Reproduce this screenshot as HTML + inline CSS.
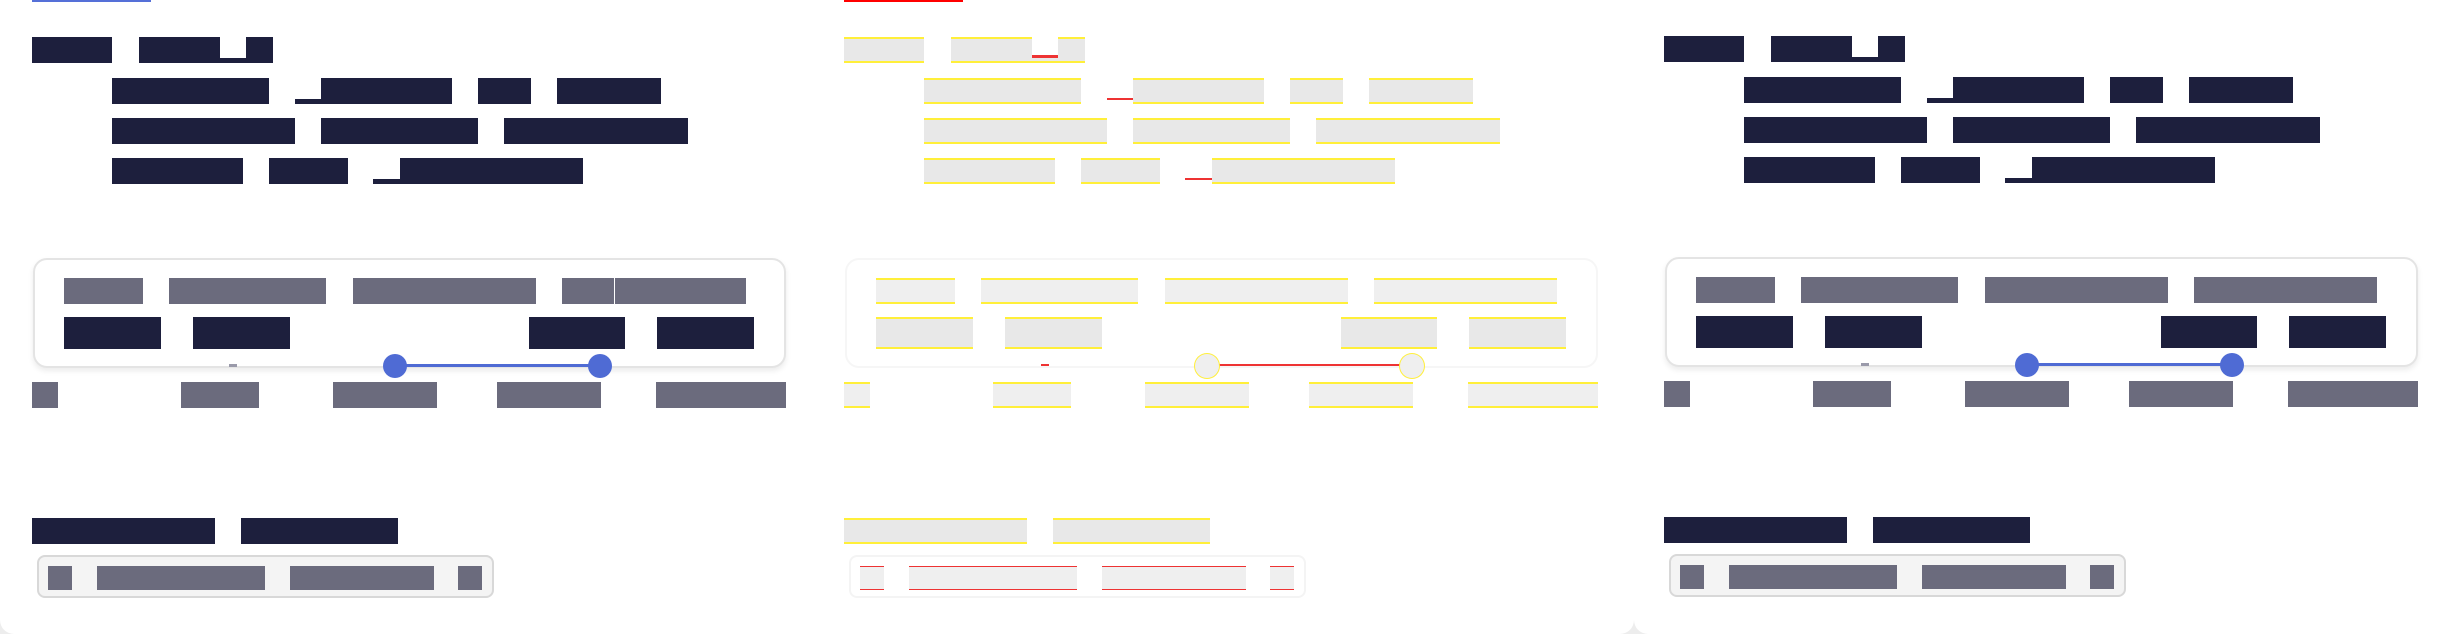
<!DOCTYPE html>
<html><head><meta charset="utf-8"><style>
html,body{margin:0;padding:0;background:#ededed;width:2448px;height:634px;overflow:hidden;font-family:"Liberation Sans",sans-serif}
.p{position:absolute;top:0;height:634px;background:#fff;overflow:hidden}
.p div{position:absolute}
.n{background:#1d1f3d}
.g{background:#6b6b7d}
.w{background:#fff}
.card{border:2px solid #e4e4e4;border-radius:14px;background:#fff;box-shadow:0 3px 6px rgba(0,0,0,.08)}
.chip{border:2px solid #d8d8d8;border-radius:8px;background:#f4f4f4}
.line{background:#4f6bd4}
.dot{background:#4f6bd4;border-radius:50%}
.mk{background:#9a9aaa}
.p2 .n,.p2 .g{background:#e8e8e8;box-shadow:inset 0 2px 0 #ffef3a,inset 0 -2px 0 #ffef3a}
.p2 .g{background:#efefef}
.p2 .card{border-color:#f6f6f6;box-shadow:none}
.p2 .chip{background:#fff;border-color:#f4f4f4}
.p2 .line{background:#e33;height:2px!important}
.p2 .dot{background:#efefef;box-shadow:0 0 0 1px #ffef3a}
.p2 .mk{background:#e33}
.p2 .top{background:#f00!important}
</style></head><body>

<div class="p" style="left:0;width:818px;border-bottom-left-radius:14px">
<div class="top" style="left:32px;top:0;width:119px;height:2px;background:#5570d8"></div>
<div class="n" style="left:32px;top:37px;width:80px;height:26px"></div>
<div class="n" style="left:139px;top:37px;width:134px;height:26px"></div>
<div class="w" style="left:220px;top:37px;width:26px;height:21px"></div>
<div class="n" style="left:112px;top:78px;width:157px;height:26px"></div>
<div class="n" style="left:295px;top:99px;width:26px;height:5px"></div>
<div class="n" style="left:321px;top:78px;width:131px;height:26px"></div>
<div class="n" style="left:478px;top:78px;width:53px;height:26px"></div>
<div class="n" style="left:557px;top:78px;width:104px;height:26px"></div>
<div class="n" style="left:112px;top:118px;width:183px;height:26px"></div>
<div class="n" style="left:321px;top:118px;width:157px;height:26px"></div>
<div class="n" style="left:504px;top:118px;width:184px;height:26px"></div>
<div class="n" style="left:112px;top:158px;width:131px;height:26px"></div>
<div class="n" style="left:269px;top:158px;width:79px;height:26px"></div>
<div class="n" style="left:373px;top:179px;width:27px;height:5px"></div>
<div class="n" style="left:400px;top:158px;width:183px;height:26px"></div>
<div class="card" style="left:33px;top:258px;width:749px;height:106px"></div>
<div class="g" style="left:64px;top:278px;width:79px;height:26px"></div>
<div class="g" style="left:169px;top:278px;width:157px;height:26px"></div>
<div class="g" style="left:353px;top:278px;width:183px;height:26px"></div>
<div class="g" style="left:562px;top:278px;width:52px;height:26px"></div>
<div class="g" style="left:615px;top:278px;width:131px;height:26px"></div>
<div class="n" style="left:64px;top:317px;width:97px;height:32px"></div>
<div class="n" style="left:193px;top:317px;width:97px;height:32px"></div>
<div class="n" style="left:529px;top:317px;width:96px;height:32px"></div>
<div class="n" style="left:657px;top:317px;width:97px;height:32px"></div>
<div class="mk" style="left:229px;top:364px;width:8px;height:3px"></div>
<div class="line" style="left:395px;top:364px;width:205px;height:3px"></div>
<div class="dot" style="left:383px;top:354px;width:24px;height:24px"></div>
<div class="dot" style="left:588px;top:354px;width:24px;height:24px"></div>
<div class="g" style="left:32px;top:382px;width:26px;height:26px"></div>
<div class="g" style="left:181px;top:382px;width:78px;height:26px"></div>
<div class="g" style="left:333px;top:382px;width:104px;height:26px"></div>
<div class="g" style="left:497px;top:382px;width:104px;height:26px"></div>
<div class="g" style="left:656px;top:382px;width:130px;height:26px"></div>
<div class="n" style="left:32px;top:518px;width:183px;height:26px"></div>
<div class="n" style="left:241px;top:518px;width:157px;height:26px"></div>
<div class="chip" style="left:37px;top:555px;width:453px;height:39px"></div>
<div class="g" style="left:48px;top:566px;width:24px;height:24px"></div>
<div class="g" style="left:97px;top:566px;width:168px;height:24px"></div>
<div class="g" style="left:290px;top:566px;width:144px;height:24px"></div>
<div class="g" style="left:458px;top:566px;width:24px;height:24px"></div>
</div>

<div class="p p2" style="left:818px;width:816px;border-bottom-right-radius:14px">
<div style="left:0;top:0;width:816px;height:634px;transform:translateX(-2px)">
<div class="top" style="left:28px;top:0;width:119px;height:2px"></div>
<div class="n" style="left:28px;top:37px;width:80px;height:26px"></div>
<div class="n" style="left:135px;top:37px;width:134px;height:26px"></div>
<div style="left:216px;top:37px;width:26px;height:21px;background:#fff;box-shadow:inset 0 -3px 0 #e33"></div>
<div class="n" style="left:108px;top:78px;width:157px;height:26px"></div>
<div style="left:291px;top:98px;width:26px;height:2px;background:#e33"></div>
<div class="n" style="left:317px;top:78px;width:131px;height:26px"></div>
<div class="n" style="left:474px;top:78px;width:53px;height:26px"></div>
<div class="n" style="left:553px;top:78px;width:104px;height:26px"></div>
<div class="n" style="left:108px;top:118px;width:183px;height:26px"></div>
<div class="n" style="left:317px;top:118px;width:157px;height:26px"></div>
<div class="n" style="left:500px;top:118px;width:184px;height:26px"></div>
<div class="n" style="left:108px;top:158px;width:131px;height:26px"></div>
<div class="n" style="left:265px;top:158px;width:79px;height:26px"></div>
<div style="left:369px;top:178px;width:27px;height:2px;background:#e33"></div>
<div class="n" style="left:396px;top:158px;width:183px;height:26px"></div>
<div class="card" style="left:29px;top:258px;width:749px;height:106px"></div>
<div class="g" style="left:60px;top:278px;width:79px;height:26px"></div>
<div class="g" style="left:165px;top:278px;width:157px;height:26px"></div>
<div class="g" style="left:349px;top:278px;width:183px;height:26px"></div>
<div class="g" style="left:558px;top:278px;width:183px;height:26px"></div>
<div class="n" style="left:60px;top:317px;width:97px;height:32px"></div>
<div class="n" style="left:189px;top:317px;width:97px;height:32px"></div>
<div class="n" style="left:525px;top:317px;width:96px;height:32px"></div>
<div class="n" style="left:653px;top:317px;width:97px;height:32px"></div>
<div class="mk" style="left:225px;top:364px;width:8px;height:2px"></div>
<div class="line" style="left:391px;top:364px;width:205px;height:2px"></div>
<div class="dot" style="left:379px;top:354px;width:24px;height:24px"></div>
<div class="dot" style="left:584px;top:354px;width:24px;height:24px"></div>
<div class="g" style="left:28px;top:382px;width:26px;height:26px"></div>
<div class="g" style="left:177px;top:382px;width:78px;height:26px"></div>
<div class="g" style="left:329px;top:382px;width:104px;height:26px"></div>
<div class="g" style="left:493px;top:382px;width:104px;height:26px"></div>
<div class="g" style="left:652px;top:382px;width:130px;height:26px"></div>
<div class="n" style="left:28px;top:518px;width:183px;height:26px"></div>
<div class="n" style="left:237px;top:518px;width:157px;height:26px"></div>
<div class="chip" style="left:33px;top:555px;width:453px;height:39px"></div>
<div class="g" style="left:44px;top:566px;width:24px;height:24px;box-shadow:inset 0 1px 0 #e33,inset 0 -1px 0 #e33"></div>
<div class="g" style="left:93px;top:566px;width:168px;height:24px;box-shadow:inset 0 1px 0 #e33,inset 0 -1px 0 #e33"></div>
<div class="g" style="left:286px;top:566px;width:144px;height:24px;box-shadow:inset 0 1px 0 #e33,inset 0 -1px 0 #e33"></div>
<div class="g" style="left:454px;top:566px;width:24px;height:24px;box-shadow:inset 0 1px 0 #e33,inset 0 -1px 0 #e33"></div>
</div>
</div>

<div class="p" style="left:1634px;width:814px;border-bottom-left-radius:14px">
<div style="left:0;top:0;width:814px;height:634px;transform:translateX(-2px)">
<div class="n" style="left:32px;top:36px;width:80px;height:26px"></div>
<div class="n" style="left:139px;top:36px;width:134px;height:26px"></div>
<div class="w" style="left:220px;top:36px;width:26px;height:21px"></div>
<div class="n" style="left:112px;top:77px;width:157px;height:26px"></div>
<div class="n" style="left:295px;top:98px;width:26px;height:5px"></div>
<div class="n" style="left:321px;top:77px;width:131px;height:26px"></div>
<div class="n" style="left:478px;top:77px;width:53px;height:26px"></div>
<div class="n" style="left:557px;top:77px;width:104px;height:26px"></div>
<div class="n" style="left:112px;top:117px;width:183px;height:26px"></div>
<div class="n" style="left:321px;top:117px;width:157px;height:26px"></div>
<div class="n" style="left:504px;top:117px;width:184px;height:26px"></div>
<div class="n" style="left:112px;top:157px;width:131px;height:26px"></div>
<div class="n" style="left:269px;top:157px;width:79px;height:26px"></div>
<div class="n" style="left:373px;top:178px;width:27px;height:5px"></div>
<div class="n" style="left:400px;top:157px;width:183px;height:26px"></div>
<div class="card" style="left:33px;top:257px;width:749px;height:106px"></div>
<div class="g" style="left:64px;top:277px;width:79px;height:26px"></div>
<div class="g" style="left:169px;top:277px;width:157px;height:26px"></div>
<div class="g" style="left:353px;top:277px;width:183px;height:26px"></div>
<div class="g" style="left:562px;top:277px;width:183px;height:26px"></div>
<div class="n" style="left:64px;top:316px;width:97px;height:32px"></div>
<div class="n" style="left:193px;top:316px;width:97px;height:32px"></div>
<div class="n" style="left:529px;top:316px;width:96px;height:32px"></div>
<div class="n" style="left:657px;top:316px;width:97px;height:32px"></div>
<div class="mk" style="left:229px;top:363px;width:8px;height:3px"></div>
<div class="line" style="left:395px;top:363px;width:205px;height:3px"></div>
<div class="dot" style="left:383px;top:353px;width:24px;height:24px"></div>
<div class="dot" style="left:588px;top:353px;width:24px;height:24px"></div>
<div class="g" style="left:32px;top:381px;width:26px;height:26px"></div>
<div class="g" style="left:181px;top:381px;width:78px;height:26px"></div>
<div class="g" style="left:333px;top:381px;width:104px;height:26px"></div>
<div class="g" style="left:497px;top:381px;width:104px;height:26px"></div>
<div class="g" style="left:656px;top:381px;width:130px;height:26px"></div>
<div class="n" style="left:32px;top:517px;width:183px;height:26px"></div>
<div class="n" style="left:241px;top:517px;width:157px;height:26px"></div>
<div class="chip" style="left:37px;top:554px;width:453px;height:39px"></div>
<div class="g" style="left:48px;top:565px;width:24px;height:24px"></div>
<div class="g" style="left:97px;top:565px;width:168px;height:24px"></div>
<div class="g" style="left:290px;top:565px;width:144px;height:24px"></div>
<div class="g" style="left:458px;top:565px;width:24px;height:24px"></div>
</div>
</div>
</body></html>
